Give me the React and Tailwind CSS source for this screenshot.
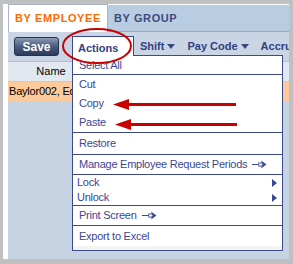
import React from "react";

// small filled caret used in the toolbar
const Caret = () => (
  <svg width="8" height="5" viewBox="0 0 8 5" className="ml-[3px] shrink-0">
    <path d="M0 0 H8 L4 5 Z" fill="#3a4682" />
  </svg>
);

// the "-=>" glyph after items that open a dialog
const GoArrow = () => (
  <svg width="15" height="9" viewBox="0 0 15 9" className="ml-[5px] shrink-0">
    <path d="M0 4.5 H7 M6 3 H11 M6 6 H11" stroke="#3a4794" strokeWidth="1" fill="none" />
    <path d="M9 0.5 L14.5 4.5 L9 8.5 L10.5 4.5 Z" fill="#3a4794" />
  </svg>
);

const SubArrow = () => (
  <svg width="5" height="8" viewBox="0 0 5 8" className="ml-auto shrink-0">
    <path d="M0 0 L5 4 L0 8 Z" fill="#3a4794" />
  </svg>
);

const Item = ({ children, className = "" }) => (
  <div className={`flex items-center pl-[6px] pr-[5px] text-[11px] font-normal tracking-[-0.25px] text-[#3a4794] ${className}`}>
    {children}
  </div>
);

const ActionsMenu = () => (
  <div className="absolute left-0 top-[19px] z-10 w-[211px] border border-[#3c4a8c] bg-white">
    <Item className="h-[19px] border-b border-[#3c4a8c]">Select All</Item>
    <div className="border-b border-[#3c4a8c]">
      <Item className="h-[19px]">Cut</Item>
      <Item className="h-[19px]">Copy</Item>
      <Item className="h-[19px]">Paste</Item>
    </div>
    <Item className="h-[22px] border-b border-[#3c4a8c]">Restore</Item>
    <Item className="h-[20px] border-b border-[#3c4a8c]">
      Manage Employee Request Periods
      <GoArrow />
    </Item>
    <div className="border-b border-[#3c4a8c]">
      <Item className="h-[15px] !pl-[4px]">
        Lock
        <SubArrow />
      </Item>
      <Item className="h-[15px] !pl-[4px]">
        Unlock
        <SubArrow />
      </Item>
    </div>
    <Item className="h-[20px] border-b border-[#3c4a8c]">
      Print Screen
      <GoArrow />
    </Item>
    <Item className="h-[20px]">Export to Excel</Item>
    <div className="h-[4px] bg-[#f4f4f4]" />
  </div>
);

const App = () => {
  return (
    <div className="relative w-[293px] h-[264px] overflow-hidden bg-[#c0c0c0] pt-[4px] pl-[3px] pr-[4px] pb-[5px] font-['Liberation_Sans',Arial,sans-serif]">
      <div className="h-full flex flex-col bg-[#c5d3e3] border-l-[5px] border-white overflow-hidden">
        {/* Tabs */}
        <div className="flex h-[28px] shrink-0">
          <div className="w-[100px] shrink-0 h-full bg-white border-t border-l border-r border-[#a9b4c4] flex items-center justify-center text-[11px] font-bold tracking-[0.6px] text-[#ff6a00]">
            BY EMPLOYEE
          </div>
          <div className="flex-1 h-full bg-[#b9cde2] border-t border-t-white border-b border-b-[#9aa8ba] flex items-center pl-[6px] text-[11px] font-bold tracking-[0.6px] text-[#3d4a80]">
            BY GROUP
          </div>
        </div>

        {/* Toolbar */}
        <div className="flex items-center h-[30px] shrink-0 bg-[#c9d5e5] pl-[6px] whitespace-nowrap text-[11px] font-bold text-[#333f80] border-b border-[#b4c0d0]">
          <button className="shrink-0 w-[45px] h-[19px] rounded-[3px] border border-[#27324c] bg-gradient-to-b from-[#8a99b6] via-[#4c5c7e] to-[#2c3a5a] text-white text-[12px] font-bold flex items-center justify-center">
            Save
          </button>
          <div className="relative shrink-0 ml-[13px] self-start mt-[4px]">
            <div className="relative z-20 w-[62px] h-[20px] bg-white border-t border-l border-r border-[#3c4a8c] pl-[5px] pt-[3px]">
              Actions
            </div>
            <ActionsMenu />
          </div>
          <div className="flex shrink-0 items-center ml-[6px]">
            Shift
            <Caret />
          </div>
          <div className="flex shrink-0 items-center ml-[12px]">
            Pay Code
            <Caret />
          </div>
          <div className="shrink-0 ml-[12px]">Accruals</div>
        </div>

        {/* Grid */}
        <div className="flex items-center h-[20px] shrink-0 bg-[#e2e8ef] border-b border-[#c2cad6] text-[11px] text-black">
          <div className="w-[86px] text-center">Name</div>
        </div>
        <div className="flex items-center h-[19px] shrink-0 bg-[#fdca9c] pl-[1px] text-[11px] tracking-[-0.2px] text-black whitespace-nowrap">
          Baylor002, Ed
        </div>
        <div className="flex-1" />
      </div>

      {/* annotations */}
      <svg className="absolute left-0 top-0 z-30 pointer-events-none" width="293" height="264">
        <ellipse cx="97" cy="46" rx="34" ry="17" fill="none" stroke="#c80000" strokeWidth="2" />
        <path d="M126 104.5 H236" stroke="#c80000" strokeWidth="3" />
        <path d="M113 104.5 L129 99 L129 110 Z" fill="#c80000" />
        <path d="M128 124.5 H237" stroke="#c80000" strokeWidth="3" />
        <path d="M115 124.5 L131 119 L131 130 Z" fill="#c80000" />
      </svg>
    </div>
  );
};

export default App;
